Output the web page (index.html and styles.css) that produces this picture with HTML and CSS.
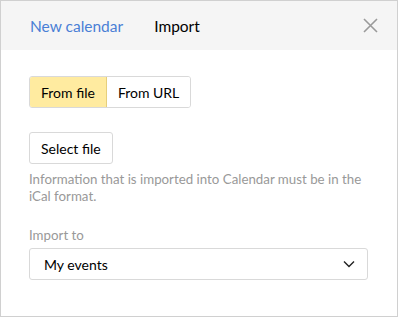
FILE: index.html
```html
<!DOCTYPE html>
<html lang="en">
<head>
  <meta charset="UTF-8">
  <title>Import calendar</title>
  <link rel="stylesheet" href="styles.css">
</head>
<body>
  <div class="dialog">
    <header class="dialog-head">
      <nav class="tabs">
        <a href="#" class="tab">New calendar</a>
        <span class="tab tab-current">Import</span>
      </nav>
      <button class="close" aria-label="Close">
        <svg width="15" height="15" viewBox="0 0 15 15">
          <path d="M1 1L14 14M14 1L1 14" stroke="#9a9a9a" stroke-width="1.6" fill="none"/>
        </svg>
      </button>
    </header>

    <div class="dialog-body">
      <div class="switch">
        <button class="switch-item active">From file</button>
        <button class="switch-item">From URL</button>
      </div>

      <button class="btn">Select file</button>
      <p class="hint">Information that is imported into Calendar must be in the iCal format.</p>

      <label class="label">Import to</label>
      <div class="select">
        <span>My events</span>
        <svg width="12" height="8" viewBox="0 0 12 8">
          <path d="M1 1.5L6 6.5L11 1.5" stroke="#222" stroke-width="1.4" fill="none"/>
        </svg>
      </div>
    </div>
  </div>
</body>
</html>
```

FILE: styles.css
```css
body {
  margin: 0;
  font-family: 'Lato', sans-serif;
  color: #000;
}
.dialog {
  width: 398px;
  height: 317px;
  box-sizing: border-box;
  border: 1px solid #d0d0d0;
  background: white;
}
.dialog-head {
  height: 49px;
  background: #f5f5f5;
  display: flex;
  align-items: center;
  justify-content: space-between;
  padding: 0 19px 0 29px;
}
.tabs {
  display: flex;
  gap: 31px;
}
.tab {
  font-size: 15.5px;
  text-decoration: none;
  color: #4a7fd6;
}
.tab-current {
  color: #000;
}
.close {
  background: none;
  border: none;
  padding: 0;
  width: 15px;
  height: 15px;
  display: flex;
}
.dialog-body {
  padding: 26px 29px 0 28px;
}
.switch {
  display: inline-flex;
  height: 32px;
  border: 1px solid #d9d9d9;
  border-radius: 3px;
  box-sizing: border-box;
  overflow: hidden;
}
.switch-item {
  font-family: inherit;
  font-size: 14px;
  background: white;
  border: none;
  padding: 0 11px;
  color: #000;
}
.switch-item.active {
  background: #ffeba0;
  border-right: 1px solid #e6cf7c;
}
.btn {
  display: block;
  margin-top: 24px;
  height: 32px;
  box-sizing: border-box;
  border: 1px solid #d9d9d9;
  border-radius: 3px;
  background: white;
  font-family: inherit;
  font-size: 14px;
  padding: 0 11px;
}
.hint {
  margin: 7px 0 0;
  font-size: 13.3px;
  line-height: 17px;
  color: #999;
}
.label {
  display: block;
  margin-top: 22px;
  font-size: 13.3px;
  line-height: 17px;
  color: #999;
}
.select {
  margin-top: 4px;
  height: 32px;
  width: 339px;
  box-sizing: border-box;
  border: 1px solid #d9d9d9;
  border-radius: 3px;
  display: flex;
  align-items: center;
  justify-content: space-between;
  padding: 0 12px 0 14px;
  font-size: 14px;
}
```
